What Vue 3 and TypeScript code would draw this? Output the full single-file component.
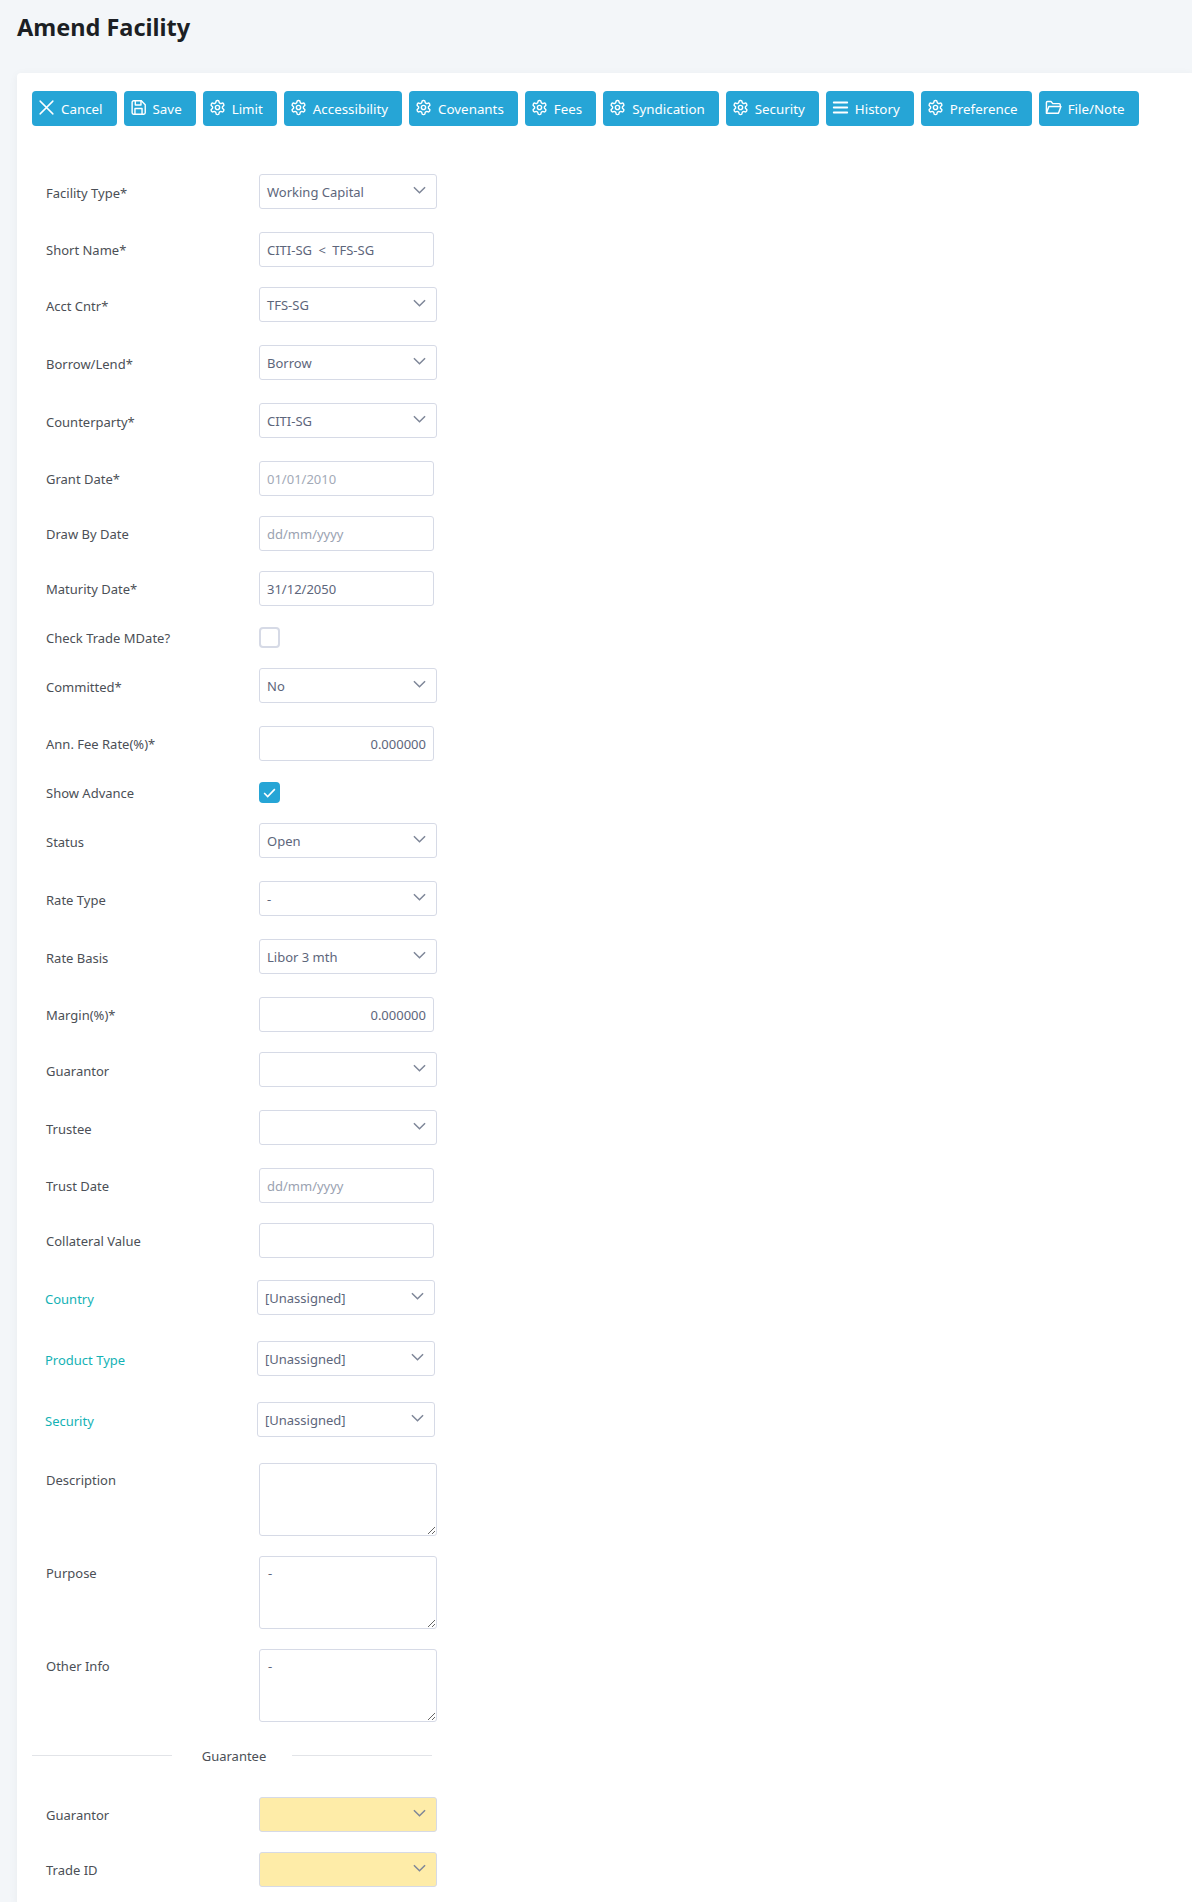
<script setup lang="ts">
type Kind = 'select' | 'input' | 'check' | 'area' | 'custom' | 'yellow'
interface Row {
  label: string
  kind: Kind
  value?: string
  placeholder?: string
  disabled?: boolean
  right?: boolean
  checked?: boolean
}
const buttons: { text: string; icon: string }[] = [
  { text: 'Cancel', icon: 'x' },
  { text: 'Save', icon: 'save' },
  { text: 'Limit', icon: 'gear' },
  { text: 'Accessibility', icon: 'gear' },
  { text: 'Covenants', icon: 'gear' },
  { text: 'Fees', icon: 'gear' },
  { text: 'Syndication', icon: 'gear' },
  { text: 'Security', icon: 'gear' },
  { text: 'History', icon: 'bars' },
  { text: 'Preference', icon: 'gear' },
  { text: 'File/Note', icon: 'folder' }
]
const gear =
  'M12.22 2h-.44a2 2 0 0 0-2 2v.18a2 2 0 0 1-1 1.73l-.43.25a2 2 0 0 1-2 0l-.15-.08a2 2 0 0 0-2.73.73l-.22.38a2 2 0 0 0 .73 2.73l.15.1a2 2 0 0 1 1 1.72v.51a2 2 0 0 1-1 1.74l-.15.09a2 2 0 0 0-.73 2.73l.22.38a2 2 0 0 0 2.73.73l.15-.08a2 2 0 0 1 2 0l.43.25a2 2 0 0 1 1 1.73V20a2 2 0 0 0 2 2h.44a2 2 0 0 0 2-2v-.18a2 2 0 0 1 1-1.73l.43-.25a2 2 0 0 1 2 0l.15.08a2 2 0 0 0 2.73-.73l.22-.39a2 2 0 0 0-.73-2.73l-.15-.08a2 2 0 0 1-1-1.74v-.5a2 2 0 0 1 1-1.74l.15-.09a2 2 0 0 0 .73-2.73l-.22-.38a2 2 0 0 0-2.73-.73l-.15.08a2 2 0 0 1-2 0l-.43-.25a2 2 0 0 1-1-1.73V4a2 2 0 0 0-2-2z'
const rows: Row[] = [
  { label: 'Facility Type*', kind: 'select', value: 'Working Capital' },
  { label: 'Short Name*', kind: 'input', value: 'CITI-SG < TFS-SG' },
  { label: 'Acct Cntr*', kind: 'select', value: 'TFS-SG' },
  { label: 'Borrow/Lend*', kind: 'select', value: 'Borrow' },
  { label: 'Counterparty*', kind: 'select', value: 'CITI-SG' },
  { label: 'Grant Date*', kind: 'input', value: '01/01/2010', disabled: true },
  { label: 'Draw By Date', kind: 'input', placeholder: 'dd/mm/yyyy' },
  { label: 'Maturity Date*', kind: 'input', value: '31/12/2050' },
  { label: 'Check Trade MDate?', kind: 'check' },
  { label: 'Committed*', kind: 'select', value: 'No' },
  { label: 'Ann. Fee Rate(%)*', kind: 'input', value: '0.000000', right: true },
  { label: 'Show Advance', kind: 'check', checked: true },
  { label: 'Status', kind: 'select', value: 'Open' },
  { label: 'Rate Type', kind: 'select', value: '-' },
  { label: 'Rate Basis', kind: 'select', value: 'Libor 3 mth' },
  { label: 'Margin(%)*', kind: 'input', value: '0.000000', right: true },
  { label: 'Guarantor', kind: 'select' },
  { label: 'Trustee', kind: 'select' },
  { label: 'Trust Date', kind: 'input', placeholder: 'dd/mm/yyyy' },
  { label: 'Collateral Value', kind: 'input' },
  { label: 'Country', kind: 'custom', value: '[Unassigned]' },
  { label: 'Product Type', kind: 'custom', value: '[Unassigned]' },
  { label: 'Security', kind: 'custom', value: '[Unassigned]' },
  { label: 'Description', kind: 'area', value: '' },
  { label: 'Purpose', kind: 'area', value: '-' },
  { label: 'Other Info', kind: 'area', value: '-' }
]
const guarantee: Row[] = [
  { label: 'Guarantor', kind: 'yellow' },
  { label: 'Trade ID', kind: 'yellow' }
]
</script>

<template>
  <div class="page">
    <h1 class="title">Amend Facility</h1>
    <section class="card">
      <div class="toolbar">
        <button v-for="b in buttons" :key="b.text" class="btn" type="button">
          <svg class="ico" viewBox="0 0 24 24" fill="none" stroke="currentColor" stroke-width="2" stroke-linecap="round" stroke-linejoin="round">
            <template v-if="b.icon === 'gear'">
              <path :d="gear" />
              <circle cx="12" cy="12" r="3" />
            </template>
            <path v-else-if="b.icon === 'x'" d="M3 3l18 18M21 3L3 21" />
            <path v-else-if="b.icon === 'bars'" d="M2.500 5h19M2.500 12h19M2.500 19h19" stroke-width="2.600" />
            <template v-else-if="b.icon === 'save'">
              <path d="M5 2.500h11l5.500 5.500v11.500a2 2 0 0 1-2 2h-14.500a2 2 0 0 1-2-2v-15a2 2 0 0 1 2-2z" />
              <path d="M7.500 2.500v6h8v-6M7 21.500v-8h10v8" />
            </template>
            <path v-else d="M2 20V5a1.500 1.500 0 0 1 1.500-1.500h5l2.500 3h9a1.500 1.500 0 0 1 1.500 1.500v2M2 20l3.500-9.500h17L19 20z" />
          </svg>
          <span>{{ b.text }}</span>
        </button>
      </div>

      <form class="form" @submit.prevent>
        <div v-for="r in rows" :key="r.label" class="row" :class="'row-' + r.kind">
          <label class="lab">{{ r.label }}</label>
          <div v-if="r.kind === 'select' || r.kind === 'custom'" class="sel">
            <span>{{ r.value }}</span>
            <svg class="chev" viewBox="0 0 14 8" fill="none" stroke="currentColor" stroke-width="1.600"><path d="M1 1l6 6 6-6" /></svg>
          </div>
          <input
            v-else-if="r.kind === 'input'"
            class="inp"
            :class="{ right: r.right, dis: r.disabled }"
            type="text"
            :value="r.value"
            :placeholder="r.placeholder"
            :disabled="r.disabled"
          />
          <div v-else-if="r.kind === 'check'" class="chk" :class="{ on: r.checked }">
            <svg v-if="r.checked" viewBox="0 0 14 14" fill="none" stroke="#fff" stroke-width="1.500"><path d="M2 7.500l3.300 3.300L12 3.800" /></svg>
          </div>
          <textarea v-else class="area" :value="r.value"></textarea>
        </div>

        <div class="divider"><span>Guarantee</span></div>

        <div v-for="r in guarantee" :key="r.label" class="row" :class="'row-' + r.kind">
          <label class="lab">{{ r.label }}</label>
          <div class="sel yellow">
            <span></span>
            <svg class="chev" viewBox="0 0 14 8" fill="none" stroke="currentColor" stroke-width="1.600"><path d="M1 1l6 6 6-6" /></svg>
          </div>
        </div>
      </form>
    </section>
  </div>
</template>

<style>
html, body { margin: 0; padding: 0; background: #f3f6f9; }
</style>

<style scoped>
.page {
  width: 1192px;
  height: 1902px;
  overflow: hidden;
  background: #f3f6f9;
  font-family: "Noto Sans", "Open Sans", sans-serif;
  font-size: 13px;
  color: #4b4f56;
}
.title {
  margin: 0;
  padding: 10px 0 0 17px;
  height: 73px;
  box-sizing: border-box;
  font-size: 23.500px;
  line-height: 34px;
  font-weight: 700;
  color: #1c1f24;
}
.card {
  margin-left: 17px;
  background: #fff;
  border-radius: 4px 0 0 0;
  padding: 18px 0 0 15px;
  height: 1829px;
  box-sizing: border-box;
  box-shadow: 0 2px 10px rgba(0, 0, 0, 0.05);
}
.toolbar { display: flex; gap: 7px; }
.btn {
  display: flex;
  align-items: center;
  height: 35px;
  padding: 0 14px 0 6px;
  gap: 6px;
  border: 0;
  border-radius: 4px;
  background: #26a5d6;
  color: #fff;
  font: inherit;
  font-size: 13.350px;
}
.ico { width: 17px; height: 17px; flex: none; margin-top: -2px; }
.form { padding-top: 48px; }
.row { display: flex; align-items: center; padding-left: 14px; }
.row-select { margin-bottom: 23px; }
.row-yellow { margin-bottom: 20px; }
.row-input { margin-bottom: 20px; }
.row-check { padding-top: 1px; margin-bottom: 20px; }
.row-custom { margin-bottom: 26px; padding-left: 13px; }
.row-input + .row-custom { padding-top: 2px; }
.row-area { margin-bottom: 20px; align-items: flex-start; }
.lab { width: 213px; flex: none; padding-top: 2px; line-height: 18px; }
.row-input .lab, .row-check .lab { padding-top: 0; }
.row-yellow .lab { padding-top: 1px; }
.row-custom .lab { color: #14b2b5; width: 212px; padding-top: 3px; }
.row-area .lab { padding-top: 8px; }
.sel, .inp, .area {
  box-sizing: border-box;
  border: 1px solid #d6dae6;
  border-radius: 3px;
  background: #fff;
  color: #5d667b;
  font: inherit;
}
.sel {
  width: 178px;
  height: 35px;
  padding: 0 10px 0 7px;
  display: flex;
  align-items: center;
  justify-content: space-between;
}
.chev { width: 13px; height: 8px; color: #7e8698; margin-bottom: 3px; }
.yellow { background: #feeca8; }
.inp { width: 175px; height: 35px; padding: 0 7px; outline: none; word-spacing: 3px; }
.inp::placeholder { color: #9aa2b1; opacity: 1; }
.inp.right { text-align: right; }
.inp.dis { color: #a3aab7; }
.area { width: 178px; height: 73px; padding: 7px 8px; display: block; resize: vertical; outline: none; }
.chk {
  box-sizing: border-box;
  width: 21px;
  height: 21px;
  border: 2px solid #d6dae6;
  border-radius: 4px;
  background: #fff;
  display: flex;
  align-items: center;
  justify-content: center;
}
.chk.on { background: #26a5d6; border-color: #26a5d6; }
.chk svg { width: 15px; height: 15px; }
.divider {
  width: 400px;
  padding-top: 4px;
  margin-bottom: 31px;
  height: 20px;
  display: flex;
  align-items: center;
  justify-content: center;
}
.divider::before, .divider::after { content: ""; height: 1px; width: 140px; background: #e2e4e8; margin-top: -2px; }
.divider span { width: 120px; text-align: center; padding-left: 4px; box-sizing: border-box; }
</style>
